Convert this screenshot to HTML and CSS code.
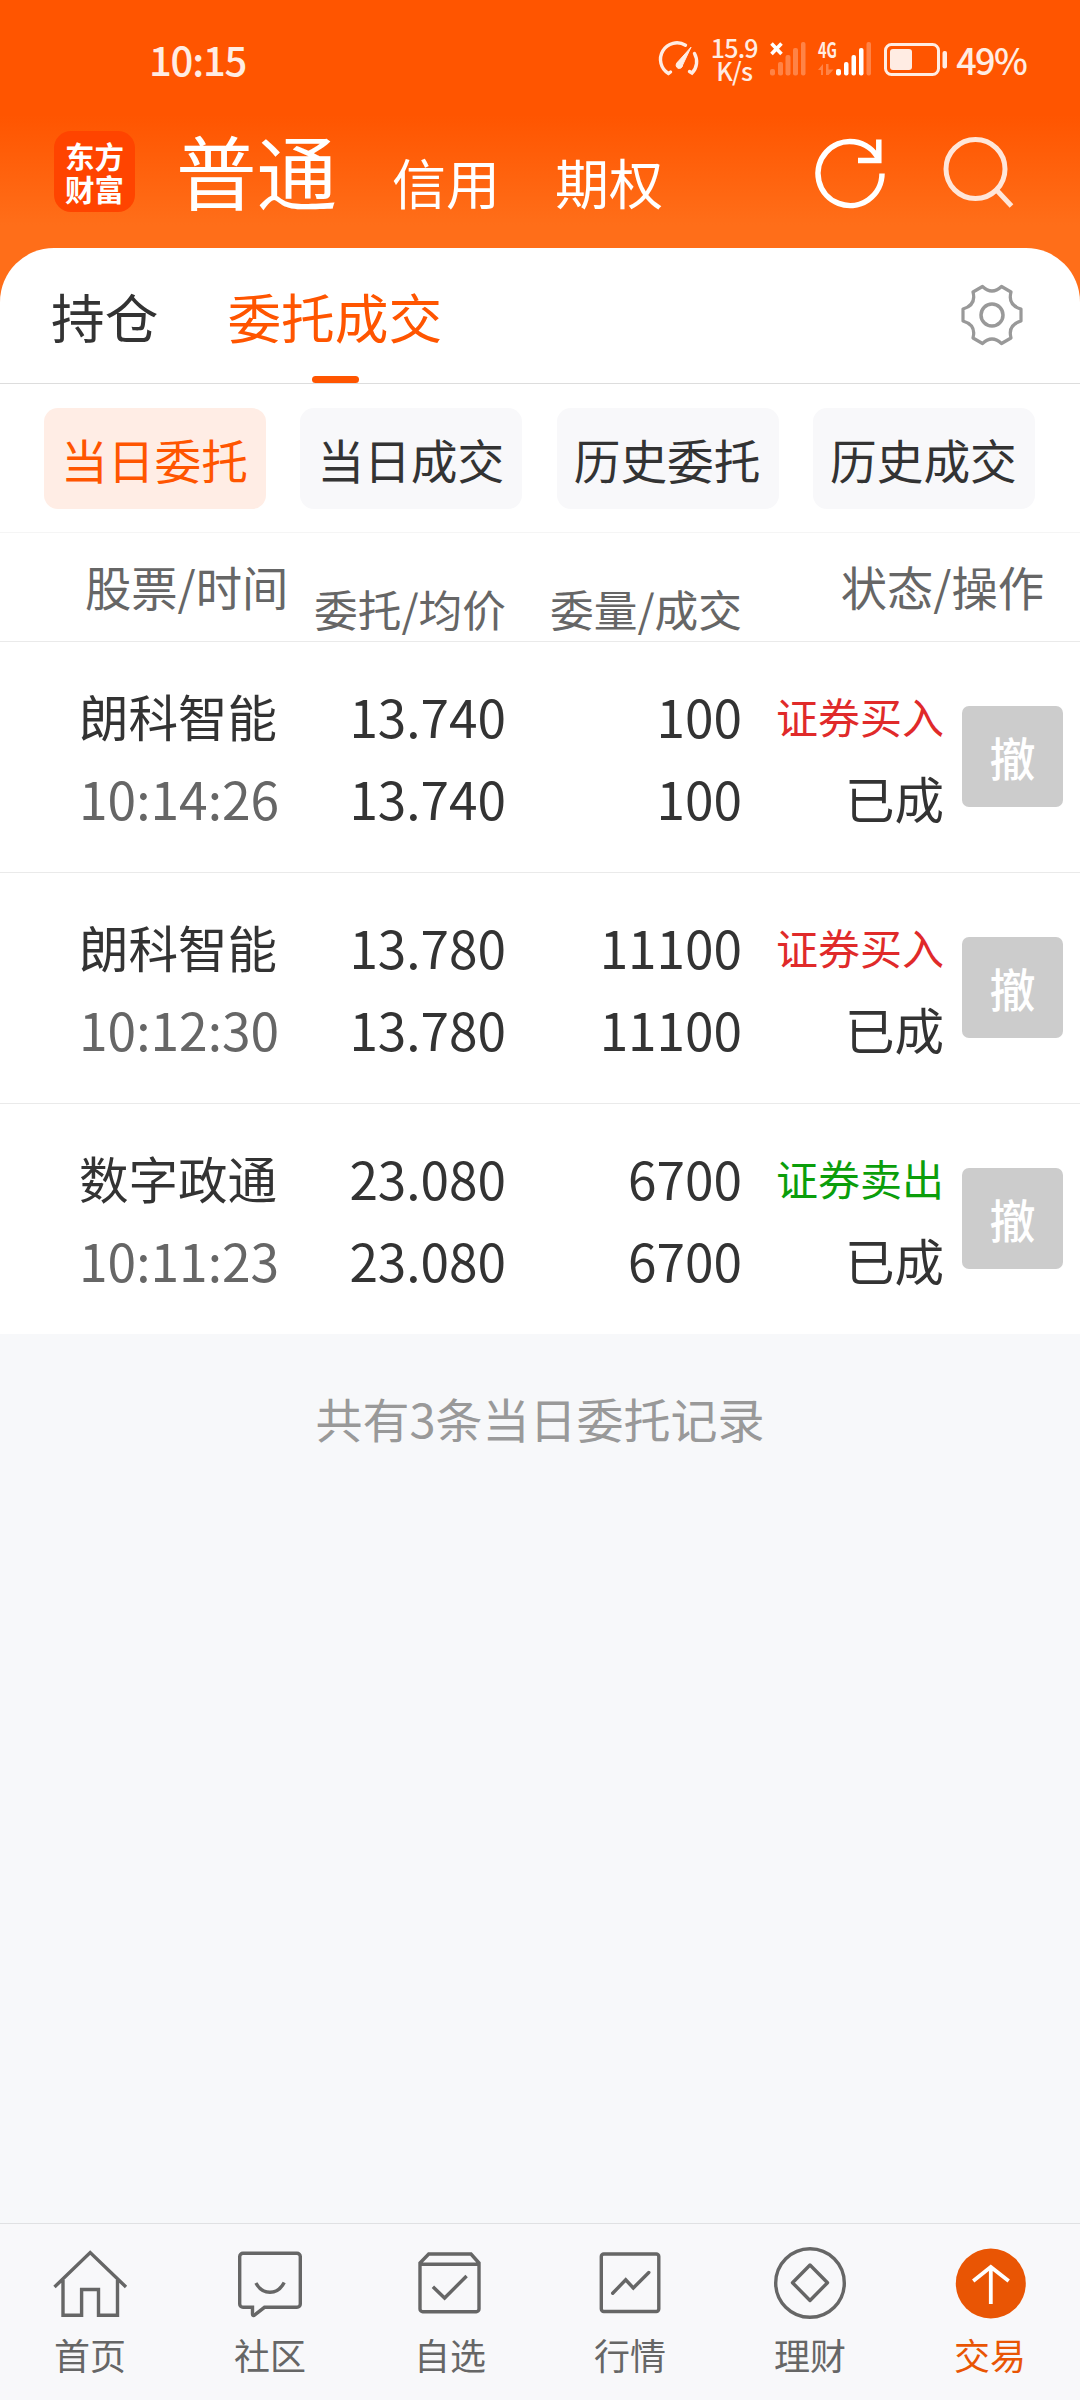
FILE: index.html
```
<!DOCTYPE html>
<html lang="zh-CN">
<head>
    <meta charset="UTF-8">
    <meta name="viewport" content="width=device-width, initial-scale=1.0">
    <title>委托成交</title>
    <link rel="stylesheet" href="styles.css">
</head>
<body>
<div class="app">

    <!-- Status bar -->
    <div class="status-bar">
        <span class="clock">10:15</span>
        <div class="status-right">
            <svg class="gauge" width="38" height="34" viewBox="0 0 38 34" fill="none" stroke="#ffece3" stroke-width="3.4" stroke-linecap="round">
                <path d="M9.5 30L7.500 31.500A16.300 16.300 0 0 1 24.5 3.2"/>
                <path d="M33.5 11.5A16.3 16.3 0 0 1 31 31L28.500 29.5"/>
                <path d="M16.2 20.6L30 5.2L21.6 23A3.3 3.3 0 1 1 16.2 20.6Z" fill="#ffece3" stroke-width="1"/>
            </svg>
            <div class="speed"><span>15.9</span><span>K/s</span></div>
            <svg class="signal" width="36" height="34" viewBox="0 0 36 34">
                <path d="M1.500 1.500L11.500 12M11.500 1.500L1.500 12" stroke="#fff" stroke-width="3.6"/>
                <g fill="#ff8346">
                    <rect x="0" y="27" width="5" height="6.5" rx="2"/>
                    <rect x="8" y="20" width="5" height="13.5" rx="2"/>
                    <rect x="15.500" y="13" width="5" height="20.500" rx="2"/>
                    <rect x="23" y="6" width="5" height="27.500" rx="2"/>
                    <rect x="31" y="0" width="4.500" height="33.500" rx="2"/>
                </g>
            </svg>
            <svg class="signal-4g" width="54" height="34" viewBox="0 0 54 34">
                <text x="0" y="15.500" textLength="19" lengthAdjust="spacingAndGlyphs" class="net-label">4G</text>
                <path d="M0 28L5 22V33H3V28ZM8 22H10.500V27.500H15.500L10.500 33H8Z" fill="#ff8346"/>
                <g fill="#fff">
                    <rect x="18" y="27" width="5" height="6.500" rx="2"/>
                    <rect x="26" y="20" width="4.500" height="13.500" rx="2"/>
                    <rect x="33.500" y="13" width="4.500" height="20.500" rx="2"/>
                    <rect x="41" y="6" width="4.500" height="27.500" rx="2"/>
                    <rect x="48.500" y="0" width="4.500" height="33.500" rx="2" fill="#ff8346"/>
                </g>
            </svg>
            <svg class="battery" width="64" height="34" viewBox="0 0 64 34">
                <rect x="1.500" y="1.500" width="53" height="30" rx="6" fill="none" stroke="#ffece3" stroke-width="3"/>
                <rect x="6" y="6" width="22" height="21" rx="3" fill="#ffece3"/>
                <rect x="58.500" y="8" width="4.500" height="17.500" rx="2" fill="#ffece3"/>
            </svg>
            <span class="percent">49%</span>
        </div>
    </div>

    <!-- Account type header -->
    <div class="header">
        <div class="logo"><span>东方</span><span>财富</span></div>
        <div class="accounts">
            <span class="account active">普通</span>
            <span class="account">信用</span>
            <span class="account">期权</span>
        </div>
        <svg class="refresh" width="76" height="76" viewBox="0 0 76 76" fill="none" stroke="#fff" stroke-width="5.500">
            <path d="M70 38.500A32 32 0 1 1 66.500 24"/>
            <path d="M66.800 4.500V25.500H46"/>
        </svg>
        <svg class="search" width="76" height="76" viewBox="0 0 76 76" fill="none" stroke="#ffe6d9" stroke-width="5">
            <circle cx="35.500" cy="34" r="29.500"/>
            <path d="M56.500 55L71.500 71"/>
        </svg>
    </div>

    <div class="panel">
        <div class="tabs">
            <span class="tab">持仓</span>
            <span class="tab active">委托成交</span>
            <svg class="gear" width="64" height="64" viewBox="0 0 64 64" fill="none" stroke="#999" stroke-width="3.200">
                <path d="M22.500 3.500Q32 12.500 41.500 3.500L51 9Q47.500 22 61 26V38Q47.500 42 51 55L41.500 60.500Q32 51.500 22.500 60.500L13 55Q16.500 42 3 38V26Q16.500 22 13 9Z" stroke-linejoin="round"/>
                <circle cx="32" cy="32" r="11" stroke-width="3.500"/>
            </svg>
        </div>

        <div class="chips">
            <span class="chip active">当日委托</span>
            <span class="chip">当日成交</span>
            <span class="chip">历史委托</span>
            <span class="chip">历史成交</span>
        </div>

        <div class="list-head">
            <span class="big">股票/时间</span>
            <span class="low">委托/均价</span>
            <span class="low">委量/成交</span>
            <span class="big end">状态/操作</span>
        </div>

        <div class="order">
            <div class="col name"><span>朗科智能</span><span class="time">10:14:26</span></div>
            <div class="col"><span>13.740</span><span>13.740</span></div>
            <div class="col"><span>100</span><span>100</span></div>
            <div class="col state"><span class="buy">证券买入</span><span>已成</span></div>
            <button class="cancel">撤</button>
        </div>
        <div class="order">
            <div class="col name"><span>朗科智能</span><span class="time">10:12:30</span></div>
            <div class="col"><span>13.780</span><span>13.780</span></div>
            <div class="col"><span>11100</span><span>11100</span></div>
            <div class="col state"><span class="buy">证券买入</span><span>已成</span></div>
            <button class="cancel">撤</button>
        </div>
        <div class="order">
            <div class="col name"><span>数字政通</span><span class="time">10:11:23</span></div>
            <div class="col"><span>23.080</span><span>23.080</span></div>
            <div class="col"><span>6700</span><span>6700</span></div>
            <div class="col state"><span class="sell">证券卖出</span><span>已成</span></div>
            <button class="cancel">撤</button>
        </div>
    </div>

    <div class="summary">共有3条当日委托记录</div>

    <!-- Bottom navigation -->
    <div class="nav">
        <div class="nav-item">
            <svg viewBox="0 0 80 80">
                <path d="M4.500 44L40.200 9.500L76 44M13 37V72.300H31.600V46.500H48.500V72.300H67.500V37"/>
            </svg>
            <span>首页</span>
        </div>
        <div class="nav-item">
            <svg viewBox="0 0 80 80">
                <path d="M13 10.300H67A3.300 3.300 0 0 1 70.300 13.500V61A3.300 3.300 0 0 1 67 64.300H34.500L24 72.500Q22.500 73 22.500 71V64.300H13A3.300 3.300 0 0 1 9.700 61V13.500A3.300 3.300 0 0 1 13 10.300Z"/>
                <path d="M25.900 40Q31 49.300 40 49.300Q49 49.300 54.200 39.500"/>
            </svg>
            <span>社区</span>
        </div>
        <div class="nav-item">
            <svg viewBox="0 0 80 80">
                <path d="M10 20L18.700 11H61L69 20V66A2.700 2.700 0 0 1 66.300 68.700H12.700A2.700 2.700 0 0 1 10 66ZM10 21.300H69"/>
                <path d="M22.900 43.700L34.600 55L56.600 33"/>
            </svg>
            <span>自选</span>
        </div>
        <div class="nav-item">
            <svg viewBox="0 0 80 80">
                <rect x="11.300" y="11" width="57.500" height="57.500" rx="2.500"/>
                <path d="M22.700 50.300L35.700 36.800L43.300 45L58.800 29.500" stroke-linecap="round"/>
            </svg>
            <span>行情</span>
        </div>
        <div class="nav-item">
            <svg viewBox="0 0 80 80">
                <circle cx="40" cy="40" r="34.300"/>
                <path d="M40 22L57.500 39.700L40 57.500L22.500 39.700Z" stroke-linejoin="round"/>
            </svg>
            <span>理财</span>
        </div>
        <div class="nav-item active">
            <svg viewBox="0 0 80 80">
                <circle class="dot" cx="40.800" cy="40.500" r="35"/>
                <path class="arrow" d="M40.800 24V61M23.200 38L40.800 24L58.700 38"/>
            </svg>
            <span>交易</span>
        </div>
    </div>

</div>
</body>
</html>
```
FILE: styles.css
```
body {
    margin: 0;
    font-family: "Noto Sans CJK SC", "Noto Sans", sans-serif;
    color: #333;
    background-color: #f7f8fa;
}

svg {
    display: block;
    flex-shrink: 0;
    overflow: visible;
}

.app {
    width: 1080px;
    height: 2400px;
    display: flex;
    flex-direction: column;
    background: linear-gradient(#ff5500 0, #ff5500 115px, #ff6e19 225px, #ff6e19 320px, #f7f8fa 320px);
    overflow: hidden;
}

/* Status bar */
.status-bar {
    display: flex;
    justify-content: space-between;
    height: 118px;
    padding: 0 54px 0 149px;
    box-sizing: border-box;
    color: #ffece3;
    font-weight: 500;
}
.clock {
    font-size: 40px;
    line-height: 58px;
    margin-top: 30px;
    letter-spacing: -1.2px;
}
.status-right {
    display: flex;
    align-items: flex-start;
    padding-top: 42px;
}
.speed {
    display: flex;
    flex-direction: column;
    align-items: center;
    width: 46px;
    margin: -6px 13px 0 12px;
    font-size: 25px;
    line-height: 22.5px;
    letter-spacing: -0.8px;
}
.signal-4g {
    margin-left: 12px;
}
.net-label {
    font-size: 21px;
    font-weight: 700;
    fill: #ffece3;
}
.battery {
    margin: 1px 0 0 12px;
}
.percent {
    font-size: 36px;
    line-height: 52px;
    margin: -9px 0 0 8px;
    letter-spacing: -1.7px;
}

/* Header */
.header {
    display: flex;
    align-items: flex-start;
    height: 130px;
    padding-left: 54px;
}
.logo {
    display: flex;
    flex-direction: column;
    align-items: center;
    justify-content: center;
    width: 81px;
    height: 81px;
    margin-top: 13px;
    border-radius: 17px;
    background-color: #ff4400;
    color: #fff;
    font-size: 29.5px;
    font-weight: 700;
    line-height: 34px;
}
.logo span {
    margin-top: -1px;
}
.accounts {
    display: flex;
    align-items: flex-start;
    width: 636px;
    margin: -2px 0 0 41px;
    color: #fff;
}
.account {
    font-size: 54px;
    line-height: 78px;
    margin: 27px 0 0 55px;
}
.account.active {
    font-size: 80.5px;
    line-height: 106px;
    margin: 0;
}
.refresh {
    margin-top: 17px;
}
.search {
    margin: 17px 0 0 52px;
}

/* White panel */
.panel {
    background-color: #fff;
    border-radius: 54px 54px 0 0;
}
.tabs {
    display: flex;
    align-items: flex-start;
    height: 135px;
    padding: 0 56px 0 51px;
    border-bottom: 1px solid #ddd;
}
.tab {
    position: relative;
    font-size: 53.7px;
    line-height: 135px;
    margin-right: 69px;
}
.tab.active {
    color: #ff5500;
}
.tab.active::after {
    content: "";
    position: absolute;
    left: 50%;
    bottom: 0;
    width: 47px;
    height: 7px;
    margin-left: -23px;
    border-radius: 4px;
    background-color: #ff5500;
}
.gear {
    margin: 35px 0 0 auto;
}

.chips {
    display: grid;
    grid-template-columns: repeat(4, 222px);
    gap: 34.3px;
    padding: 24px 44px 23px;
    border-bottom: 1px solid #f5f5f5;
}
.chip {
    height: 101px;
    border-radius: 14px;
    background-color: #f8f8fa;
    font-size: 46.7px;
    line-height: 101px;
    text-align: center;
    text-indent: -1px;
}
.chip.active {
    background-color: #ffede5;
    color: #ff5500;
}

.list-head {
    display: grid;
    grid-template-columns: 210px 211px 236px 302px;
    height: 108px;
    padding: 0 36px 0 85px;
    border-bottom: 1px solid #eaeaea;
    color: #666;
    text-align: right;
}
.big {
    font-size: 46.3px;
    line-height: 106px;
    text-align: left;
}
.low {
    font-size: 43.7px;
    line-height: 151px;
}
.end {
    text-align: right;
}

/* Order rows */
.order {
    display: grid;
    grid-template-columns: 210px 217px 236px 202px 101px;
    height: 230px;
    padding: 0 16px 0 79px;
    border-bottom: 1px solid #eaeaea;
}
.order:last-child {
    border-bottom: none;
}
.col {
    display: flex;
    flex-direction: column;
    padding-top: 33px;
    font-size: 51.3px;
    line-height: 82px;
    text-align: right;
}
.col span {
    height: 82px;
}
.name {
    font-size: 49.5px;
    text-align: left;
}
.time {
    color: #666;
    font-size: 51.5px;
}
.state {
    font-size: 49.5px;
}
.buy, .sell {
    font-size: 42px;
}
.buy {
    color: #e02a2a;
}
.sell {
    color: #0b9e0b;
}
.cancel {
    width: 101px;
    height: 101px;
    margin: 64px 0 0 18px;
    padding: 0;
    border: none;
    border-radius: 7px;
    background-color: #ccc;
    color: #fff;
    font-family: inherit;
    font-size: 46px;
    font-weight: 500;
    line-height: 101px;
}

.summary {
    flex: 1;
    padding-top: 50px;
    background-color: #f7f8fa;
    color: #999;
    font-size: 47px;
    line-height: 68px;
    text-align: center;
}

/* Bottom navigation */
.nav {
    display: grid;
    grid-template-columns: repeat(6, 1fr);
    height: 176px;
    border-top: 1px solid #e0e1e3;
    background-color: #f8f8fa;
}
.nav-item {
    display: flex;
    flex-direction: column;
    align-items: center;
    padding-top: 19px;
    color: #666;
    font-size: 36px;
    line-height: 52px;
}
.nav-item svg {
    width: 80px;
    height: 80px;
    margin-bottom: 5px;
    fill: none;
    stroke: #666;
    stroke-width: 3.4;
}
.nav-item.active {
    color: #e95504;
}
.nav-item .dot {
    fill: #e95504;
    stroke: none;
}
.nav-item .arrow {
    stroke: #fff;
    stroke-width: 3.8;
}
```
